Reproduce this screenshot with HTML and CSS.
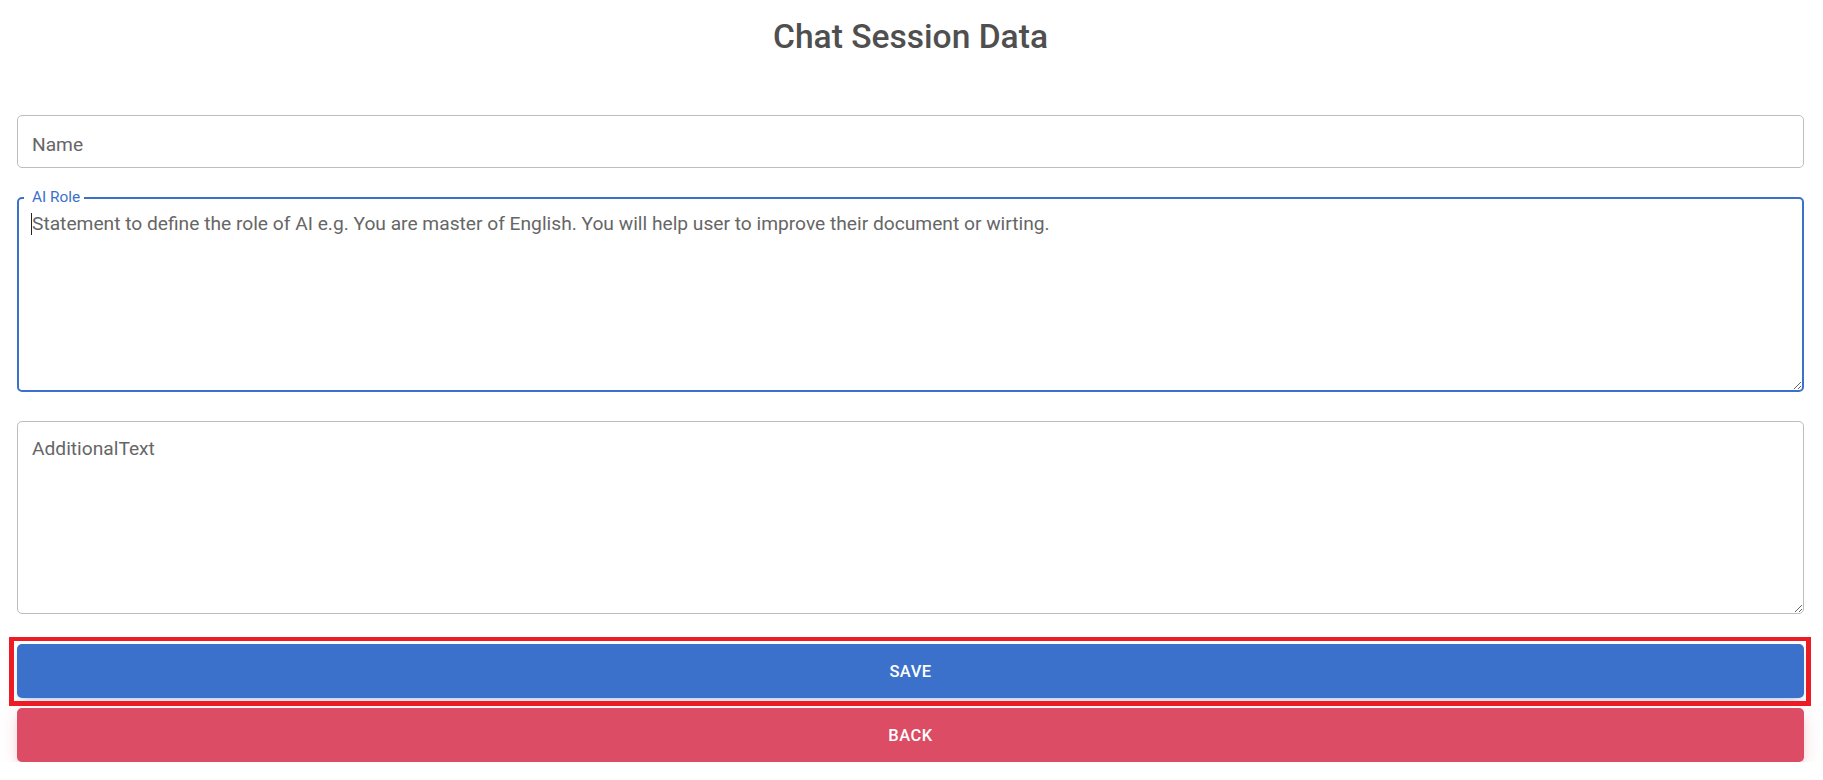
FILE: index.html
```html
<!DOCTYPE html>
<html lang="en">
<head>
<meta charset="utf-8">
<title>Chat Session Data</title>
<link rel="stylesheet" href="styles.css">
</head>
<body>
<main class="page">
  <h1 class="title">Chat Session Data</h1>
  <form class="form">
    <input class="field field-name" type="text" placeholder="Name">
    <div class="outline focused">
      <label class="notch-label">AI Role</label>
      <span class="caret"></span>
      <textarea class="area area-focused" placeholder="Statement to define the role of AI e.g. You are master of English. You will help user to improve their document or wirting."></textarea>
    </div>
    <textarea class="area area-plain" placeholder="AdditionalText"></textarea>
    <div class="highlight-wrap">
      <button type="button" class="btn btn-primary">Save</button>
      <span class="highlight"></span>
    </div>
    <button type="button" class="btn btn-danger">Back</button>
  </form>
</main>
</body>
</html>
```
FILE: styles.css
```css
html, body {
  margin: 0;
  background: #ffffff;
}
body {
  font-family: Roboto, "Noto Sans", "Liberation Sans", sans-serif;
  color: #4f4f4f;
}
.page {
  padding: 17px 19px 0 17px;
}
.title {
  margin: 0;
  font-size: 33.6px;
  line-height: 40px;
  font-weight: 500;
  text-align: center;
  color: #4f4f4f;
}
.form {
  display: flex;
  flex-direction: column;
  margin-top: 58px;
}
.field,
.area {
  display: block;
  width: 100%;
  box-sizing: border-box;
  margin: 0;
  font-family: inherit;
  font-size: 19.2px;
  line-height: 30px;
  color: #4f4f4f;
  background: #fff;
  border: 1px solid #bdbdbd;
  border-radius: 5px;
  outline: none;
}
.field::placeholder,
.area::placeholder {
  color: #666666;
  opacity: 1;
}
.field-name {
  height: 53px;
  padding: 13px 14px 8px 14px;
}
.outline {
  position: relative;
  margin-top: 29px;
}
.area-focused {
  height: 195px;
  border: 2px solid #3b71ca;
  padding: 9.5px 13px 8px 13px;
}
.notch-label {
  position: absolute;
  left: 7px;
  top: -7px;
  padding: 0 4px 0 8px;
  background: #fff;
  font-size: 15.4px;
  line-height: 15.4px;
  color: #3b71ca;
}
.caret {
  position: absolute;
  left: 14px;
  top: 16px;
  width: 1px;
  height: 22px;
  background: #222;
}
.area-plain {
  height: 193px;
  margin-top: 29px;
  padding: 12px 14px 8px 14px;
}
.highlight-wrap {
  position: relative;
  margin-top: 30px;
}
.highlight {
  position: absolute;
  left: -8px;
  right: -7px;
  top: -7px;
  bottom: -8px;
  border: 5px solid #ed1c24;
  border-top-width: 4px;
  pointer-events: none;
}
.btn {
  display: block;
  width: 100%;
  height: 54px;
  border: 0;
  border-radius: 5px;
  font-family: inherit;
  font-size: 16.5px;
  font-weight: 500;
  letter-spacing: 0.5px;
  text-transform: uppercase;
  color: #fff;
  cursor: pointer;
}
.btn-primary {
  background: #3b71ca;
  box-shadow: 0 4px 9px -4px rgba(59, 113, 202, 0.55);
}
.btn-danger {
  margin-top: 10px;
  background: #dc4c64;
  box-shadow: 0 8px 9px -4px rgba(220, 76, 100, 0.3), 0 4px 18px 0 rgba(220, 76, 100, 0.2);
}
```
